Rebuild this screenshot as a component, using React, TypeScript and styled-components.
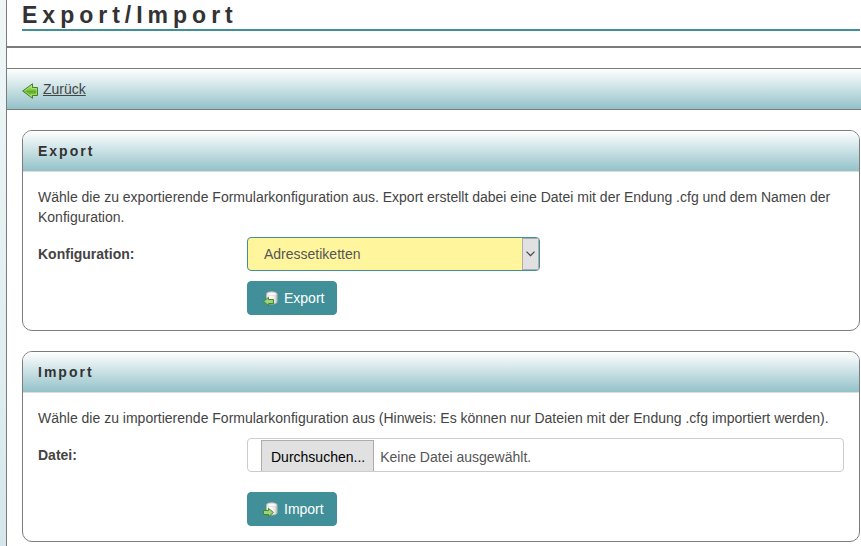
import React, { useState } from "react";
import styled, { createGlobalStyle } from "styled-components";

const GlobalStyle = createGlobalStyle`
  *, *::before, *::after { box-sizing: border-box; }
  html, body { margin: 0; padding: 0; overflow-x: hidden; }
  body {
    font-family: "Liberation Sans", Arial, sans-serif;
    font-size: 14px;
    line-height: 20px;
    color: #444;
    background: #fff;
  }
`;

const barGradient = "linear-gradient(to bottom, #ffffff, #93c2c9)";
const lineColor = "#7c7c7c";
const accent = "#418f98";

const Page = styled.div`
  min-height: 100vh;
  padding-left: 6px;
  background: linear-gradient(to bottom, #f0f6f8, #e0eeef 65%, #d5e7ec);
`;

const Main = styled.main`
  min-height: 100vh;
  border-left: 1px solid ${lineColor};
  background: #fff;
`;

const Header = styled.header`
  padding: 0 1px 15px 15px;
  border-bottom: 2px solid ${lineColor};
`;

const Title = styled.h1`
  margin: 0;
  padding-top: 2px;
  border-bottom: 2px solid ${accent};
  font-size: 23px;
  line-height: 27px;
  letter-spacing: 5px;
  color: #333;
`;

const Toolbar = styled.nav`
  display: flex;
  align-items: center;
  height: 42px;
  margin-top: 20px;
  padding: 0 15px;
  border: solid ${lineColor};
  border-width: 1px 0;
  background: ${barGradient};
`;

const BackLink = styled.a`
  display: flex;
  align-items: center;
  gap: 5px;
  color: #444;

  svg { margin-top: 3px; }
`;

const Content = styled.div`
  display: grid;
  gap: 20px;
  padding: 20px 1px 4px 15px;
`;

const Panel = styled.section`
  overflow: hidden;
  border: 1px solid ${lineColor};
  border-radius: 10px;
  background: #fff;
`;

const PanelTitle = styled.h2`
  margin: 0;
  padding: 10px 15px;
  border-bottom: 1px solid #ddd;
  background: ${barGradient};
  font-size: 14px;
  line-height: 20px;
  letter-spacing: 2px;
  color: #333;
`;

const PanelBody = styled.form`
  padding: 15px;
`;

const Hint = styled.p`
  margin: 0 0 10px;
`;

const Field = styled.div`
  display: grid;
  grid-template-columns: 209px minmax(0, 1fr);
`;

const FieldLabel = styled.label`
  padding-top: 7px;
  font-weight: bold;
`;

const Actions = styled.div<{ $gap: number }>`
  padding: ${(p) => p.$gap}px 0 0 209px;
`;

const SelectBox = styled.div`
  position: relative;
  width: 293px;
  max-width: 100%;
`;

const Select = styled.select`
  display: block;
  width: 100%;
  height: 34px;
  padding: 0 32px 0 16px;
  appearance: none;
  border: 1px solid ${accent};
  border-radius: 4px;
  background: #fff59d;
  font: inherit;
  color: #555;
`;

const SelectArrow = styled.span`
  position: absolute;
  top: 1px;
  right: 1px;
  bottom: 1px;
  display: flex;
  align-items: center;
  justify-content: center;
  width: 17px;
  border: 1px solid #adadad;
  background: #e1e1e1;
  pointer-events: none;
`;

const FilePicker = styled.label`
  display: flex;
  align-items: stretch;
  height: 34px;
  padding: 1px 12px 0 13px;
  overflow: hidden;
  border: 1px solid #ccc;
  border-radius: 4px;
  background: #fff;
  color: #555;
  cursor: pointer;

  &:focus-within { border-color: ${accent}; }
`;

const HiddenFile = styled.input`
  position: absolute;
  width: 1px;
  height: 1px;
  opacity: 0;
`;

const BrowseButton = styled.span`
  display: flex;
  align-items: center;
  padding: 2px 8px 0 9px;
  border: 1px solid #adadad;
  border-bottom: 0;
  background: #e1e1e1;
  color: #000;
`;

const FileName = styled.span`
  display: flex;
  align-items: center;
  padding: 3px 0 0 6px;
`;

const Button = styled.button`
  display: inline-flex;
  align-items: center;
  gap: 5px;
  height: 34px;
  padding: 0 12px 0 15px;
  border: 1px solid ${accent};
  border-radius: 4px;
  background: ${accent};
  font: inherit;
  color: #fff;
  cursor: pointer;

  svg { margin-top: 2px; }
`;

function BackIcon() {
  return (
    <svg width="16" height="16" viewBox="0 0 16 16" aria-hidden="true">
      <defs>
        <linearGradient id="back-fill" x1="0" y1="0" x2="0" y2="1">
          <stop offset="0" stopColor="#b4e07c" />
          <stop offset="0.45" stopColor="#7cc644" />
          <stop offset="0.5" stopColor="#58aa1c" />
          <stop offset="1" stopColor="#a0e060" />
        </linearGradient>
      </defs>
      <path d="M.7 8 10.500.8V4.500H15.500V12.500H10.500V15.300Z" fill="url(#back-fill)" stroke="#4a7f22" />
      <path d="M2.500 8 9.500 2.900V5.500H14.500V11.500H9.500V13.300Z" fill="none" stroke="#c9eda4" strokeOpacity=".5" />
    </svg>
  );
}

function DatabaseIcon({ direction }: { direction: "out" | "in" }) {
  const gradient = `cylinder-${direction}`;
  return (
    <svg width="16" height="16" viewBox="0 0 16 16" aria-hidden="true">
      <defs>
        <linearGradient id={gradient}>
          <stop offset="0" stopColor="#e2e2e2" />
          <stop offset="0.35" stopColor="#ffffff" />
          <stop offset="0.7" stopColor="#f0f0f0" />
          <stop offset="1" stopColor="#c4c4c4" />
        </linearGradient>
      </defs>
      <path
        d="M3.500 3C3.500.1 14 .1 14 3V11C14 13.600 3.500 13.600 3.500 11Z"
        fill={`url(#${gradient})`}
        stroke="#bcb8b8"
      />
      <ellipse cx="8.750" cy="3" rx="4.700" ry="1.600" fill="#fbfafa" stroke="#d4d0d0" strokeWidth=".6" />
      {direction === "out" ? (
        <path d="M.6 10.500 5.500 6.300V8.500H10.500V12.500H5.500V14.700Z" fill="#a0d080" stroke="#3f8a24" />
      ) : (
        <path d="M10.400 10.500 5.500 6.300V8.500H.5V12.500H5.500V14.700Z" fill="#a0d080" stroke="#3f8a24" />
      )}
    </svg>
  );
}

function ChevronIcon() {
  return (
    <svg width="9" height="6" viewBox="0 0 9 6" aria-hidden="true">
      <path d="M.5.7 4.500 4.700 8.500.7" fill="none" stroke="#444" strokeWidth="1.200" />
    </svg>
  );
}

export default function App() {
  const [fileName, setFileName] = useState("Keine Datei ausgewählt.");

  return (
    <>
      <GlobalStyle />
      <Page>
        <Main lang="de">
          <Header>
            <Title>Export/Import</Title>
          </Header>
          <Toolbar>
            <BackLink href="#">
              <BackIcon />
              Zurück
            </BackLink>
          </Toolbar>
          <Content>
            <Panel>
              <PanelTitle>Export</PanelTitle>
              <PanelBody onSubmit={(e) => e.preventDefault()}>
                <Hint>
                  Wähle die zu exportierende Formularkonfiguration aus. Export erstellt dabei eine Datei mit
                  der Endung .cfg und dem Namen der Konfiguration.
                </Hint>
                <Field>
                  <FieldLabel htmlFor="configuration">Konfiguration:</FieldLabel>
                  <SelectBox>
                    <Select id="configuration">
                      <option>Adressetiketten</option>
                    </Select>
                    <SelectArrow>
                      <ChevronIcon />
                    </SelectArrow>
                  </SelectBox>
                </Field>
                <Actions $gap={10}>
                  <Button type="submit">
                    <DatabaseIcon direction="out" />
                    Export
                  </Button>
                </Actions>
              </PanelBody>
            </Panel>
            <Panel>
              <PanelTitle>Import</PanelTitle>
              <PanelBody onSubmit={(e) => e.preventDefault()}>
                <Hint>
                  Wähle die zu importierende Formularkonfiguration aus (Hinweis: Es können nur Dateien mit
                  der Endung .cfg importiert werden).
                </Hint>
                <Field>
                  <FieldLabel htmlFor="file">Datei:</FieldLabel>
                  <FilePicker>
                    <HiddenFile
                      id="file"
                      type="file"
                      accept=".cfg"
                      onChange={(e) =>
                        setFileName(e.target.files?.[0]?.name ?? "Keine Datei ausgewählt.")
                      }
                    />
                    <BrowseButton>Durchsuchen...</BrowseButton>
                    <FileName>{fileName}</FileName>
                  </FilePicker>
                </Field>
                <Actions $gap={20}>
                  <Button type="submit">
                    <DatabaseIcon direction="in" />
                    Import
                  </Button>
                </Actions>
              </PanelBody>
            </Panel>
          </Content>
        </Main>
      </Page>
    </>
  );
}
